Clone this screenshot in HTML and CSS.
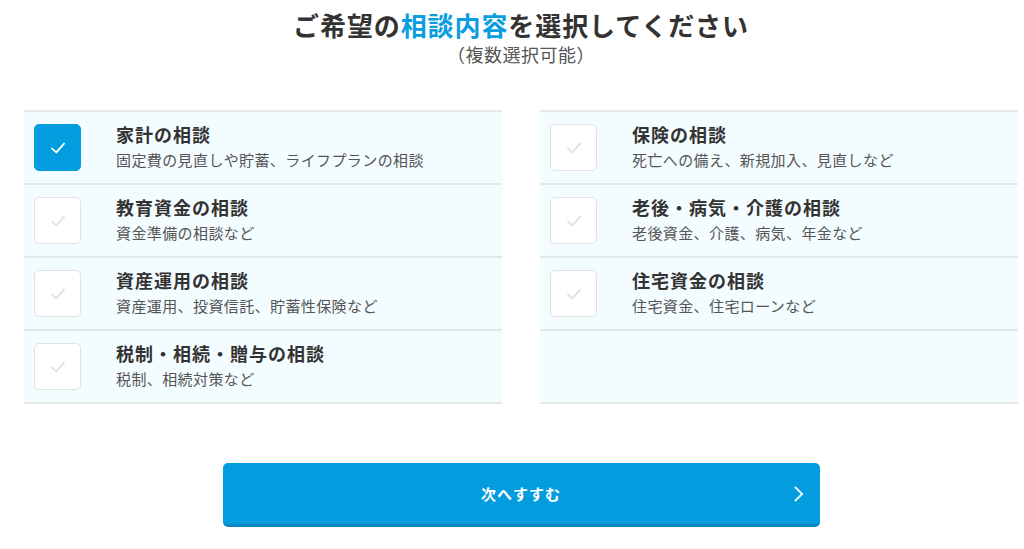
FILE: index.html
```html
<!DOCTYPE html>
<html lang="ja">
<head>
<meta charset="UTF-8">
<meta name="viewport" content="width=device-width, initial-scale=1.0">
<title>ご希望の相談内容を選択してください</title>
<link rel="stylesheet" href="styles.css">
</head>
<body>
<div class="page">
  <h1 class="heading">ご希望の<span class="accent">相談内容</span>を選択してください</h1>
  <p class="note">（複数選択可能）</p>

  <div class="columns">
    <ul class="list">
      <li class="item">
        <span class="check checked"><svg viewBox="0 0 20 20"><path d="M4.5 10.5l4 3.5 7-8"/></svg></span>
        <div class="text">
          <div class="title">家計の相談</div>
          <div class="desc">固定費の見直しや貯蓄、ライフプランの相談</div>
        </div>
      </li>
      <li class="item">
        <span class="check"><svg viewBox="0 0 20 20"><path d="M4.5 10.5l4 3.5 7-8"/></svg></span>
        <div class="text">
          <div class="title">教育資金の相談</div>
          <div class="desc">資金準備の相談など</div>
        </div>
      </li>
      <li class="item">
        <span class="check"><svg viewBox="0 0 20 20"><path d="M4.5 10.5l4 3.5 7-8"/></svg></span>
        <div class="text">
          <div class="title">資産運用の相談</div>
          <div class="desc">資産運用、投資信託、貯蓄性保険など</div>
        </div>
      </li>
      <li class="item">
        <span class="check"><svg viewBox="0 0 20 20"><path d="M4.5 10.5l4 3.5 7-8"/></svg></span>
        <div class="text">
          <div class="title">税制・相続・贈与の相談</div>
          <div class="desc">税制、相続対策など</div>
        </div>
      </li>
    </ul>

    <ul class="list">
      <li class="item">
        <span class="check"><svg viewBox="0 0 20 20"><path d="M4.5 10.5l4 3.5 7-8"/></svg></span>
        <div class="text">
          <div class="title">保険の相談</div>
          <div class="desc">死亡への備え、新規加入、見直しなど</div>
        </div>
      </li>
      <li class="item">
        <span class="check"><svg viewBox="0 0 20 20"><path d="M4.5 10.5l4 3.5 7-8"/></svg></span>
        <div class="text">
          <div class="title">老後・病気・介護の相談</div>
          <div class="desc">老後資金、介護、病気、年金など</div>
        </div>
      </li>
      <li class="item">
        <span class="check"><svg viewBox="0 0 20 20"><path d="M4.5 10.5l4 3.5 7-8"/></svg></span>
        <div class="text">
          <div class="title">住宅資金の相談</div>
          <div class="desc">住宅資金、住宅ローンなど</div>
        </div>
      </li>
      <li class="item empty"></li>
    </ul>
  </div>

  <button type="button" class="next">
    次へすすむ
    <svg class="arrow" viewBox="0 0 12 20"><path d="M2 2l8 8-8 8"/></svg>
  </button>
</div>
</body>
</html>
```

FILE: styles.css
```css
body {
  margin: 0;
  padding: 0;
  background-color: #fff;
  font-family: "Noto Sans CJK JP", "Noto Sans", sans-serif;
  color: #333;
}

.page {
  width: 994px;
  margin-left: 24px;
  display: flex;
  flex-direction: column;
  align-items: center;
}

.heading {
  margin: 7px 0 0;
  font-size: 26px;
  font-weight: bold;
  letter-spacing: 0.9px;
  line-height: 36px;
  color: #333;
}

.accent {
  color: #0a9ee0;
}

.note {
  margin: -2px 0 0;
  font-size: 18px;
  line-height: 26px;
  letter-spacing: 0.5px;
  color: #555;
}

.columns {
  width: 100%;
  display: grid;
  grid-template-columns: 1fr 1fr;
  gap: 38px;
  margin-top: 43px;
}

.list {
  list-style: none;
  margin: 0;
  padding: 0;
  border-top: 2px solid #e4e8e9;
}

.item {
  display: flex;
  align-items: center;
  height: 71px;
  padding-left: 10px;
  background-color: #f3fcff;
  border-bottom: 2px solid #e4e8e9;
}

.check {
  flex: none;
  width: 45px;
  height: 45px;
  border: 1px solid #e2e2e2;
  border-radius: 5px;
  background-color: #fff;
  display: flex;
  align-items: center;
  justify-content: center;
}

.check svg {
  width: 22px;
  height: 22px;
  fill: none;
  stroke: #e0e0e0;
  stroke-width: 1.6;
  stroke-linecap: round;
  stroke-linejoin: round;
}

.check.checked {
  background-color: #039ddf;
  border-color: #039ddf;
}

.check.checked svg {
  stroke: #fff;
}

.text {
  margin-left: 35px;
  margin-top: -3px;
}

.title {
  font-size: 18px;
  font-weight: bold;
  line-height: 26px;
  letter-spacing: 1px;
  color: #333;
}

.desc {
  margin-top: 2px;
  font-size: 15px;
  line-height: 22px;
  letter-spacing: 0.4px;
  color: #555;
}

.next {
  position: relative;
  margin-top: 59px;
  width: 597px;
  height: 64px;
  border: none;
  border-bottom: 3px solid #0b86c0;
  border-radius: 5px;
  background-color: #039ddf;
  color: #fff;
  font-family: inherit;
  font-size: 15px;
  font-weight: bold;
  letter-spacing: 1px;
  cursor: pointer;
}

.arrow {
  position: absolute;
  right: 16px;
  top: 22px;
  width: 11px;
  height: 18px;
  fill: none;
  stroke: #fff;
  stroke-width: 2;
}
```
